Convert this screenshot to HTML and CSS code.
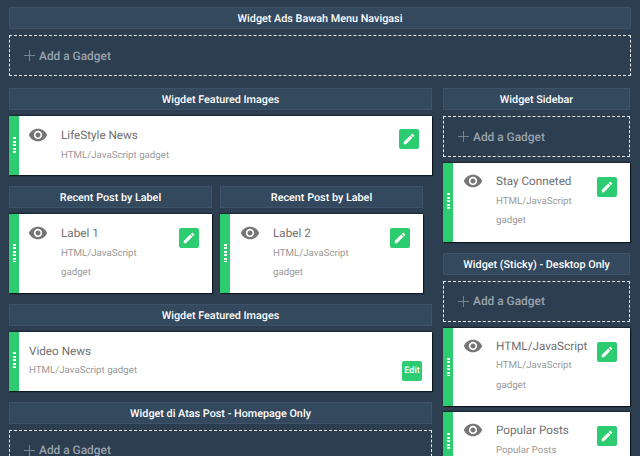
FILE: index.html
```html
<!DOCTYPE html>
<html lang="en">
<head>
  <meta charset="UTF-8">
  <title>Layout</title>
  <link rel="stylesheet" href="styles.css">
</head>
<body>
  <svg class="sprite" width="0" height="0">
    <symbol id="eye" viewBox="0 0 24 24"><path d="M12 4.5C7 4.5 2.73 7.61 1 12c1.73 4.39 6 7.5 11 7.5s9.27-3.11 11-7.5c-1.73-4.39-6-7.5-11-7.5zM12 17c-2.76 0-5-2.24-5-5s2.24-5 5-5 5 2.24 5 5-2.24 5-5 5zm0-8c-1.66 0-3 1.34-3 3s1.34 3 3 3 3-1.34 3-3-1.34-3-3-3z"/></symbol>
    <symbol id="pencil" viewBox="0 0 24 24"><path d="M3 17.25V21h3.75L17.81 9.94l-3.75-3.75L3 17.25zM20.71 7.04c.39-.39.39-1.02 0-1.41l-2.34-2.34c-.39-.39-1.02-.39-1.41 0l-1.83 1.83 3.75 3.75 1.83-1.83z"/></symbol>
  </svg>

  <div class="section top">
    <h2 class="head">Widget Ads Bawah Menu Navigasi</h2>
    <div class="add"><span class="plus"></span>Add a Gadget</div>
  </div>

  <div class="columns">
    <div class="main">
      <div class="section">
        <h2 class="head">Wigdet Featured Images</h2>
        <div class="card">
          <div class="handle"><i></i></div>
          <svg class="eye"><use href="#eye"/></svg>
          <div class="text">
            <div class="title">LifeStyle News</div>
            <div class="sub">HTML/JavaScript gadget</div>
          </div>
          <a class="edit"><svg><use href="#pencil"/></svg></a>
        </div>
      </div>

      <div class="pair section">
        <div>
          <h2 class="head">Recent Post by Label</h2>
          <div class="card narrow">
            <div class="handle"><i></i></div>
            <svg class="eye"><use href="#eye"/></svg>
            <div class="text">
              <div class="title">Label 1</div>
              <div class="sub">HTML/JavaScript<br>gadget</div>
            </div>
            <a class="edit"><svg><use href="#pencil"/></svg></a>
          </div>
        </div>
        <div>
          <h2 class="head">Recent Post by Label</h2>
          <div class="card narrow">
            <div class="handle"><i></i></div>
            <svg class="eye"><use href="#eye"/></svg>
            <div class="text">
              <div class="title">Label 2</div>
              <div class="sub">HTML/JavaScript<br>gadget</div>
            </div>
            <a class="edit"><svg><use href="#pencil"/></svg></a>
          </div>
        </div>
      </div>

      <div class="section">
        <h2 class="head">Wigdet Featured Images</h2>
        <div class="card">
          <div class="handle"><i></i></div>
          <div class="text no-eye">
            <div class="title">Video News</div>
            <div class="sub">HTML/JavaScript gadget</div>
          </div>
          <a class="edit edit-text">Edit</a>
        </div>
      </div>

      <div class="section">
        <h2 class="head">Widget di Atas Post - Homepage Only</h2>
        <div class="add"><span class="plus"></span>Add a Gadget</div>
      </div>
    </div>

    <div class="side">
      <div class="section">
        <h2 class="head">Widget Sidebar</h2>
        <div class="add"><span class="plus"></span>Add a Gadget</div>
        <div class="card narrow">
          <div class="handle"><i></i></div>
          <svg class="eye"><use href="#eye"/></svg>
          <div class="text">
            <div class="title">Stay Conneted</div>
            <div class="sub">HTML/JavaScript<br>gadget</div>
          </div>
          <a class="edit"><svg><use href="#pencil"/></svg></a>
        </div>
      </div>

      <div class="section">
        <h2 class="head">Widget (Sticky) - Desktop Only</h2>
        <div class="add"><span class="plus"></span>Add a Gadget</div>
        <div class="card narrow">
          <div class="handle"><i></i></div>
          <svg class="eye"><use href="#eye"/></svg>
          <div class="text">
            <div class="title">HTML/JavaScript</div>
            <div class="sub">HTML/JavaScript<br>gadget</div>
          </div>
          <a class="edit"><svg><use href="#pencil"/></svg></a>
        </div>
        <div class="card narrow">
          <div class="handle"><i></i></div>
          <svg class="eye"><use href="#eye"/></svg>
          <div class="text">
            <div class="title">Popular Posts</div>
            <div class="sub">Popular Posts</div>
          </div>
          <a class="edit"><svg><use href="#pencil"/></svg></a>
        </div>
      </div>
    </div>
  </div>
</body>
</html>
```

FILE: styles.css
```css
html {
  height: 100%;
  overflow: hidden;
}

body {
  margin: 0;
  padding: 7px 9px 0;
  background: #2c3e50;
  font-family: Roboto, "Liberation Sans", sans-serif;
  text-rendering: geometricPrecision;
}

.sprite {
  position: absolute;
}

.section {
  margin-bottom: 11px;
}

.top {
  width: 622px;
  margin-bottom: 12px;
}

.columns {
  display: flex;
  gap: 11px;
  align-items: flex-start;
}

.main {
  width: 423px;
}

.side {
  width: 187px;
}

.pair {
  display: grid;
  grid-template-columns: 203px 203px;
  gap: 8px;
}

.head {
  margin: 0 0 6px;
  height: 22px;
  box-sizing: border-box;
  background: #34495e;
  border: 1px solid #3e5369;
  color: #fff;
  font-size: 10.8px;
  font-weight: 500;
  line-height: 22px;
  text-align: center;
}

.add {
  display: flex;
  align-items: center;
  height: 41px;
  box-sizing: border-box;
  padding-left: 14px;
  border: 1px dashed #e4e8ec;
  color: #9aa3ad;
  font-size: 11.9px;
  font-weight: 500;
}

.plus {
  width: 11px;
  height: 11px;
  margin-right: 4px;
  background:
    linear-gradient(#77848f, #77848f) center / 11px 1px no-repeat,
    linear-gradient(#77848f, #77848f) center / 1px 11px no-repeat;
}

.add + .card {
  margin-top: 6px;
}

.card + .card {
  margin-top: 6px;
}

.card {
  display: flex;
  align-items: flex-start;
  background: #fff;
  box-shadow: 1px 1px 1px #10181f, 0 -1px 1px #1b2732;
}

.handle {
  align-self: stretch;
  flex: none;
  width: 10px;
  display: flex;
  align-items: center;
  justify-content: center;
  background: #2ecc71;
}

.handle i {
  width: 3px;
  height: 18px;
  background: repeating-linear-gradient(#fff 0 2px, transparent 2px 3.5px);
}

.eye {
  flex: none;
  width: 20px;
  height: 20px;
  margin: 9px 13px 0 9px;
  fill: #757575;
}

.side .eye,
.pair > div + div .eye {
  margin-left: 10px;
}

.side .eye {
  margin-top: 8px;
}

.text {
  flex: 1;
  padding: 10px 0;
}

.side .text {
  padding: 9px 0 11px;
}

.no-eye {
  margin-left: 10px;
}

.title {
  color: #707070;
  font-size: 11.7px;
  line-height: 19.5px;
}

.sub {
  color: #999;
  font-size: 9.7px;
  line-height: 19.5px;
}

.edit {
  flex: none;
  width: 20px;
  height: 20px;
  margin: 13px 13px 0 auto;
  display: flex;
  align-items: center;
  justify-content: center;
  background: #2ecc71;
  border-radius: 2px;
}

.narrow .edit {
  margin-top: 14px;
}

.edit svg {
  width: 14px;
  height: 14px;
  fill: #fff;
}

.edit-text {
  align-self: flex-end;
  margin: 0 10px 10px auto;
  color: #fff;
  font-size: 9px;
  font-weight: 500;
}
```
